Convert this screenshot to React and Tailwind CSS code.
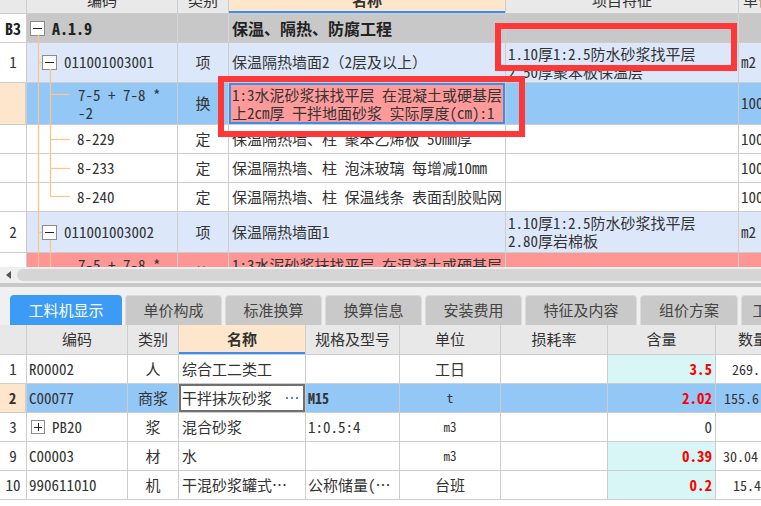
import React from "react";

const F = "font-['Noto_Sans_Mono_CJK_SC','Noto_Sans_CJK_SC',sans-serif]";

function Cell({ w, className = "", children }) {
  return (
    <div
      className={`${w} ${className} shrink-0 h-full border-r border-[#cdcdcd] flex items-center overflow-hidden whitespace-nowrap`}
    >
      {children}
    </div>
  );
}

function Row({ h, className = "", children }) {
  return <div className={`flex ${h} ${className} border-b border-[#cdcdcd] shrink-0`}>{children}</div>;
}

function TreeBox({ plus }) {
  return (
    <span className="relative w-[15px] h-[15px] border border-[#8c8c8c] bg-white flex items-center justify-center shrink-0">
      <span className="w-[9px] h-px bg-[#222]" />
      {plus && <span className="absolute w-px h-[9px] bg-[#222]" />}
    </span>
  );
}

const T = ["w-[27px]", "w-[151px]", "w-[51px]", "w-[277px]", "w-[233px]", "w-[40px]"];
const B = ["w-[27px]", "w-[101px]", "w-[51px]", "w-[127px]", "w-[94px]", "w-[101px]", "w-[107px]", "w-[108px]", "w-[75px]"];

function TopGrid() {
  return (
    <div className="relative h-[267px] overflow-hidden">
      {/* header */}
      <Row h="h-[14px]" className="bg-[#e9e9e9]">
        <Cell w={T[0]} />
        <Cell w={T[1]} className="justify-center items-start"><span className="-mt-[8px] leading-[15px]">编码</span></Cell>
        <Cell w={T[2]} className="justify-center items-start"><span className="-mt-[8px] leading-[15px]">类别</span></Cell>
        <Cell w={T[3]} className="justify-center items-start bg-[#fde6cb] shadow-[inset_0_-2px_0_#3b8ef0]"><span className="-mt-[8px] leading-[15px] font-bold">名称</span></Cell>
        <Cell w={T[4]} className="justify-center items-start"><span className="-mt-[8px] leading-[15px]">项目特征</span></Cell>
        <Cell w={T[5]} className="items-start pl-[4px]"><span className="-mt-[8px] leading-[15px]">单位</span></Cell>
      </Row>
      {/* B3 */}
      <Row h="h-[29px]" className="bg-[#c8c8c8]">
        <Cell w={T[0]} className="justify-center bg-white font-bold text-[16px] text-[#222]">B3</Cell>
        <Cell w={T[1]} className="pl-[3px] border-[#d6d6d6]">
          <TreeBox />
          <span className="ml-[7px] font-bold text-[16px] text-[#222]">A.1.9</span>
        </Cell>
        <Cell w={T[2]} className="border-[#d6d6d6]" />
        <Cell w={T[3]} className="pl-[3px] font-bold text-[16px] text-[#222] border-[#c8c8c8]">保温、隔热、防腐工程</Cell>
        <Cell w={T[4]} className="border-[#d6d6d6]" />
        <Cell w={T[5]} />
      </Row>
      {/* row 1 */}
      <Row h="h-[40px]" className="bg-[#dce8fa]">
        <Cell w={T[0]} className="justify-center bg-white">1</Cell>
        <Cell w={T[1]} className="pl-[15px]">
          <TreeBox />
          <span className="ml-[7px]">011001003001</span>
        </Cell>
        <Cell w={T[2]} className="justify-center">项</Cell>
        <Cell w={T[3]} className="pl-[3px]">保温隔热墙面2（2层及以上）</Cell>
        <Cell w={T[4]} className="pl-[2px]">
          <div className="leading-[18px]">
            <div>1.10厚1:2.5防水砂浆找平层</div>
            <div>2.50厚聚苯板保温层</div>
          </div>
        </Cell>
        <Cell w={T[5]} className="pl-[2px]">m2</Cell>
      </Row>
      {/* selected 换 row */}
      <Row h="h-[42px]" className="bg-[#93c7f6]">
        <Cell w={T[0]} className="bg-[#fde6cb] border-r-2 border-[#3b8ef0]" />
        <Cell w={T[1]} className="pl-[51px]">
          <div className="leading-[18px]">
            <div>7-5 + 7-8 *</div>
            <div>-2</div>
          </div>
        </Cell>
        <Cell w={T[2]} className="justify-center">换</Cell>
        <Cell w={T[3]} className="pl-[3px] bg-[#ff9a9a] shadow-[inset_0_0_0_2px_#3b8ef0]">
          <div className="leading-[18px]">
            <div>1:3水泥砂浆抹找平层 在混凝土或硬基层</div>
            <div>上2cm厚 干拌地面砂浆  实际厚度(cm):1</div>
          </div>
        </Cell>
        <Cell w={T[4]} />
        <Cell w={T[5]} className="pl-[2px]">100</Cell>
      </Row>
      {[
        ["8-229", "保温隔热墙、柱 聚苯乙烯板 50mm厚"],
        ["8-233", "保温隔热墙、柱 泡沫玻璃 每增减10mm"],
        ["8-240", "保温隔热墙、柱 保温线条 表面刮胶贴网"],
      ].map(([code, name]) => (
        <Row key={code} h="h-[29px]" className="bg-white">
          <Cell w={T[0]} />
          <Cell w={T[1]} className="pl-[50px]">{code}</Cell>
          <Cell w={T[2]} className="justify-center">定</Cell>
          <Cell w={T[3]} className="pl-[3px]">{name}</Cell>
          <Cell w={T[4]} />
          <Cell w={T[5]} className="pl-[2px]">100</Cell>
        </Row>
      ))}
      {/* row 2 */}
      <Row h="h-[41px]" className="bg-[#dce8fa]">
        <Cell w={T[0]} className="justify-center bg-white">2</Cell>
        <Cell w={T[1]} className="pl-[15px]">
          <TreeBox />
          <span className="ml-[7px]">011001003002</span>
        </Cell>
        <Cell w={T[2]} className="justify-center">项</Cell>
        <Cell w={T[3]} className="pl-[3px]">保温隔热墙面1</Cell>
        <Cell w={T[4]} className="pl-[2px]">
          <div className="leading-[18px]">
            <div>1.10厚1:2.5防水砂浆找平层</div>
            <div>2.80厚岩棉板</div>
          </div>
        </Cell>
        <Cell w={T[5]} className="pl-[2px]">m2</Cell>
      </Row>
      {/* pink row (cut) */}
      <Row h="h-[42px]" className="bg-[#ff9696]">
        <Cell w={T[0]} className="bg-white" />
        <Cell w={T[1]} className="pl-[51px]">
          <div className="leading-[18px]">
            <div>7-5 + 7-8 *</div>
            <div>-2</div>
          </div>
        </Cell>
        <Cell w={T[2]} className="justify-center">换</Cell>
        <Cell w={T[3]} className="pl-[3px]">
          <div className="leading-[18px]">
            <div>1:3水泥砂浆抹找平层 在混凝土或硬基层</div>
            <div>上2cm厚 干拌地面砂浆  实际厚度(cm):1</div>
          </div>
        </Cell>
        <Cell w={T[4]} />
        <Cell w={T[5]} className="pl-[2px]">100</Cell>
      </Row>

      {/* tree connector lines */}
      <svg className="absolute left-0 top-0 pointer-events-none" width="80" height="267">
        <g stroke="#f8c68e" strokeWidth="1.3" fill="none">
          <line x1="38.5" y1="35" x2="38.5" y2="267" />
          <line x1="38" y1="62.5" x2="42" y2="62.5" />
          <line x1="50.5" y1="69" x2="50.5" y2="196.5" />
          <line x1="50" y1="94.5" x2="70" y2="94.5" />
          <line x1="50" y1="139.5" x2="70" y2="139.5" />
          <line x1="50" y1="168.5" x2="70" y2="168.5" />
          <line x1="50" y1="196.5" x2="70" y2="196.5" />
          <line x1="38" y1="232.5" x2="42" y2="232.5" />
          <line x1="50.5" y1="240" x2="50.5" y2="267" />
        </g>
      </svg>
    </div>
  );
}

function Tabs() {
  const tabs = [
    ["工料机显示", "w-[112px]"],
    ["单价构成", "w-[97px]"],
    ["标准换算", "w-[97px]"],
    ["换算信息", "w-[97px]"],
    ["安装费用", "w-[97px]"],
    ["特征及内容", "w-[112px]"],
    ["组价方案", "w-[98px]"],
    ["工程量明细", "w-[98px]"],
  ];
  return (
    <div className="h-[38px] bg-[#f0f0f0] pt-[8px] pl-[10px] flex gap-[3px] overflow-hidden">
      {tabs.map(([t, w], i) => (
        <div
          key={t}
          className={`${w} shrink-0 h-[30px] rounded-t-[4px] flex items-center justify-center ${
            i === 0 ? "bg-[#3c9cf5] text-white" : "bg-[#c9c9c9] text-[#444] border-t border-x border-[#dcdcdc]"
          }`}
        >
          {t}
        </div>
      ))}
    </div>
  );
}

function Dots() {
  return (
    <span className="flex gap-[3px] items-center">
      <span className="w-[2px] h-[2px] bg-[#3b8ef0]" />
      <span className="w-[2px] h-[2px] bg-[#3b8ef0]" />
      <span className="w-[2px] h-[2px] bg-[#3b8ef0]" />
    </span>
  );
}

function BottomGrid() {
  const cyan = "bg-[#d9f6f6]";
  const red = "justify-end pr-[3px] text-[#ff0000] font-bold";
  return (
    <div>
      <Row h="h-[30px]" className="bg-[#e8e8e8]">
        <Cell w={B[0]} />
        <Cell w={B[1]} className="justify-center">编码</Cell>
        <Cell w={B[2]} className="justify-center">类别</Cell>
        <Cell w={B[3]} className="justify-center bg-[#fde6cb] font-bold shadow-[inset_0_-2px_0_#3b8ef0]">名称</Cell>
        <Cell w={B[4]} className="justify-center">规格及型号</Cell>
        <Cell w={B[5]} className="justify-center">单位</Cell>
        <Cell w={B[6]} className="justify-center">损耗率</Cell>
        <Cell w={B[7]} className="justify-center">含量</Cell>
        <Cell w={B[8]} className="justify-center">数量</Cell>
      </Row>
      <Row h="h-[29px]" className="bg-white">
        <Cell w={B[0]} className="justify-center">1</Cell>
        <Cell w={B[1]} className="pl-[2px]">R00002</Cell>
        <Cell w={B[2]} className="justify-center">人</Cell>
        <Cell w={B[3]} className="pl-[3px]">综合工二类工</Cell>
        <Cell w={B[4]} />
        <Cell w={B[5]} className="justify-center">工日</Cell>
        <Cell w={B[6]} />
        <Cell w={B[7]} className={`${cyan} ${red}`}>3.5</Cell>
        <Cell w={B[8]} className="pl-[16px] text-[14px]">269.</Cell>
      </Row>
      <Row h="h-[29px]" className="bg-[#93c7f6]">
        <Cell w={B[0]} className="justify-center bg-[#fde6cb] font-bold border-r-2 border-[#3b8ef0]">2</Cell>
        <Cell w={B[1]} className="pl-[2px]">C00077</Cell>
        <Cell w={B[2]} className="justify-center">商浆</Cell>
        <Cell w={B[3]} className="pl-[3px] bg-white shadow-[inset_0_0_0_2px_#707070] justify-between pr-[7px]">
          <span>干拌抹灰砂浆</span>
          <Dots />
        </Cell>
        <Cell w={B[4]} className="pl-[2px] font-bold text-[14px]">M15</Cell>
        <Cell w={B[5]} className="justify-center text-[13px]">t</Cell>
        <Cell w={B[6]} />
        <Cell w={B[7]} className={red}>2.02</Cell>
        <Cell w={B[8]} className="pl-[8px] text-[14px]">155.6</Cell>
      </Row>
      <Row h="h-[29px]" className="bg-white">
        <Cell w={B[0]} className="justify-center">3</Cell>
        <Cell w={B[1]} className="pl-[4px]">
          <span className="relative w-[14px] h-[14px] border border-[#8c8c8c] bg-white flex items-center justify-center shrink-0">
            <span className="w-[8px] h-px bg-[#222]" />
            <span className="absolute w-px h-[8px] bg-[#222]" />
          </span>
          <span className="ml-[7px]">PB20</span>
        </Cell>
        <Cell w={B[2]} className="justify-center">浆</Cell>
        <Cell w={B[3]} className="pl-[3px]">混合砂浆</Cell>
        <Cell w={B[4]} className="pl-[2px]">1:0.5:4</Cell>
        <Cell w={B[5]} className="justify-center text-[13px]">m3</Cell>
        <Cell w={B[6]} />
        <Cell w={B[7]} className="justify-end pr-[3px]">0</Cell>
        <Cell w={B[8]} />
      </Row>
      <Row h="h-[29px]" className="bg-white">
        <Cell w={B[0]} className="justify-center">9</Cell>
        <Cell w={B[1]} className="pl-[2px]">C00003</Cell>
        <Cell w={B[2]} className="justify-center">材</Cell>
        <Cell w={B[3]} className="pl-[3px]">水</Cell>
        <Cell w={B[4]} />
        <Cell w={B[5]} className="justify-center text-[13px]">m3</Cell>
        <Cell w={B[6]} />
        <Cell w={B[7]} className={`${cyan} ${red}`}>0.39</Cell>
        <Cell w={B[8]} className="pl-[7px] text-[14px]">30.04</Cell>
      </Row>
      <Row h="h-[29px]" className="bg-white">
        <Cell w={B[0]} className="justify-center">10</Cell>
        <Cell w={B[1]} className="pl-[2px]">990611010</Cell>
        <Cell w={B[2]} className="justify-center">机</Cell>
        <Cell w={B[3]} className="pl-[3px]">干混砂浆罐式…</Cell>
        <Cell w={B[4]} className="pl-[2px]">公称储量(…</Cell>
        <Cell w={B[5]} className="justify-center">台班</Cell>
        <Cell w={B[6]} />
        <Cell w={B[7]} className={`${cyan} ${red}`}>0.2</Cell>
        <Cell w={B[8]} className="pl-[17px] text-[14px]">15.4</Cell>
      </Row>
    </div>
  );
}

export default function App() {
  return (
    <div className={`relative w-[761px] h-[506px] overflow-hidden bg-white text-[15px] text-[#333] ${F}`}>
      <TopGrid />
      {/* horizontal scrollbar */}
      <div className="h-[16px] bg-[#efefef] flex items-center">
        <div className="w-[17px] flex justify-center">
          <svg width="6" height="8" viewBox="0 0 6 8">
            <path d="M5 0 L0 4 L5 8 Z" fill="#555" />
          </svg>
        </div>
        <div className="flex-1 h-[12px] rounded-l-full bg-[#d5d5d5]" />
      </div>
      <div className="h-[4px] bg-[#c8c8c8]" />
      <Tabs />
      <BottomGrid />

      {/* red annotation boxes */}
      <div className="absolute left-[495px] top-[23px] w-[242px] h-[48px] border-[6px] border-[#fd3838] pointer-events-none" />
      <div className="absolute left-[218px] top-[76px] w-[307px] h-[61px] border-[6px] border-[#fd3838] pointer-events-none" />
    </div>
  );
}
